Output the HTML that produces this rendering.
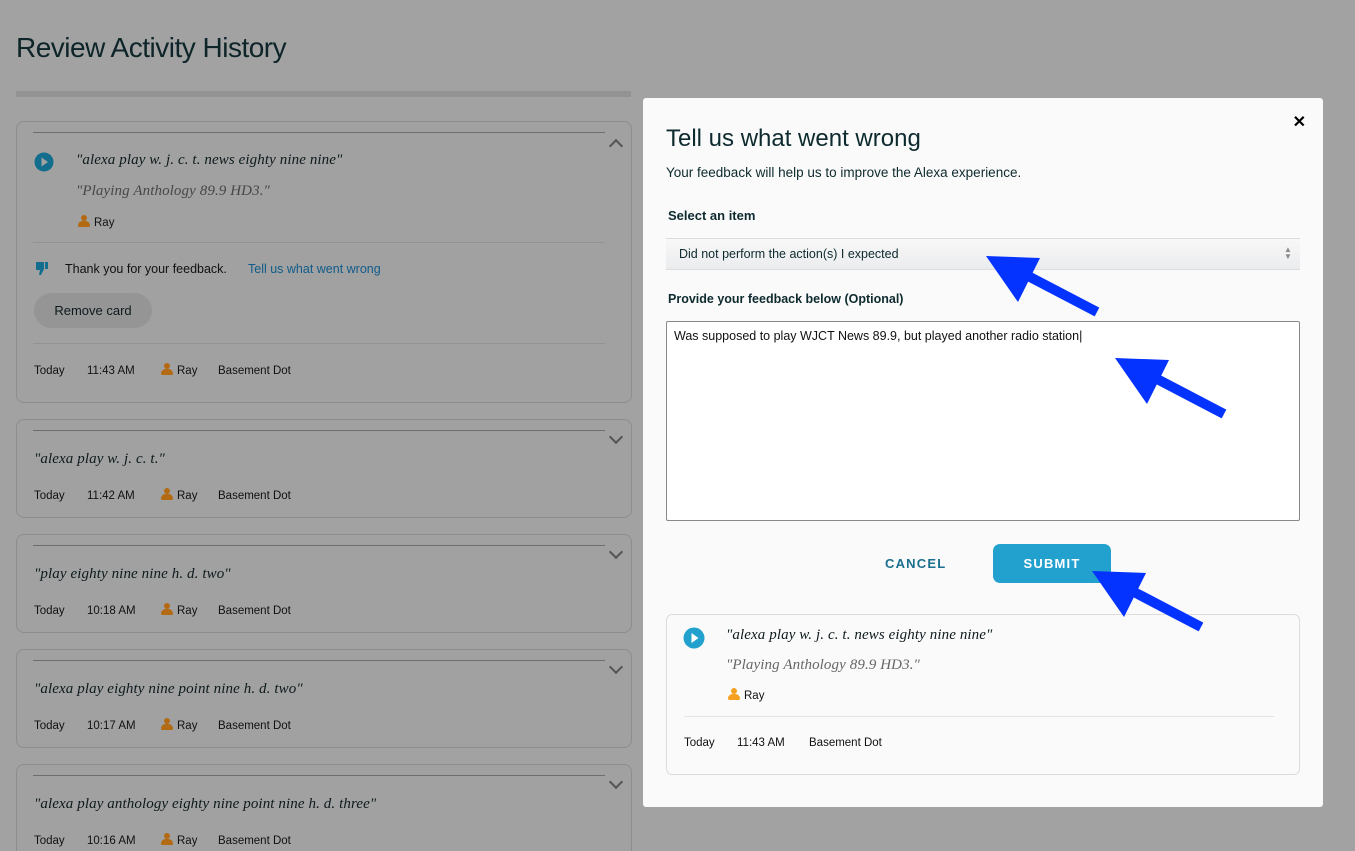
<!DOCTYPE html>
<html style="width:1355px;height:851px;overflow:hidden"><head><meta charset="utf-8"><style>
*{box-sizing:border-box;margin:0;padding:0}
body{width:1355px;height:851px;overflow:hidden;background:#a2a2a2;font-family:"Liberation Sans",sans-serif;color:#0d1a1c;position:relative}
.abs{position:absolute}
h1{position:absolute;left:16px;top:32px;font-weight:normal;font-size:28px;color:#0d2428;letter-spacing:-0.5px}
.bar{left:16px;top:91px;width:615px;height:6px;background:#939393}
.card{position:absolute;left:16px;width:616px;border:1px solid #8d8d8d;border-radius:8px;background:#a1a1a1}
.tl{position:absolute;left:16px;right:26px;top:10px;height:1px;background:#6e6e6e}
.q{position:absolute;font-family:"Liberation Serif",serif;font-style:italic;font-size:15px;color:#0d1a1c;letter-spacing:0.1px}
.meta{position:absolute;font-size:11.5px;color:#111}
.chev{position:absolute;right:10px;width:10px;height:10px;border-right:2.5px solid #555;border-bottom:2.5px solid #555}
.person{display:inline-block;position:relative;width:12px;height:12px;vertical-align:-1px;margin-right:4px}
.person:before{content:"";position:absolute;left:3px;top:0;width:6px;height:6px;border-radius:50%;background:var(--c)}
.person:after{content:"";position:absolute;left:0;top:6px;width:12px;height:6px;border-radius:6px 6px 2px 2px;background:var(--c)}
.modal{left:643px;top:98px;width:680px;height:709px;background:#fafafa;border-radius:3px}
.m{position:absolute;color:#0d2a2e}
</style></head><body>
<h1>Review Activity History</h1>
<div class="abs bar"></div>

<div class="card" style="top:121px;height:282px">
  <div class="tl"></div>
  <div class="chev" style="top:19px;transform:rotate(-135deg)"></div>
  <svg class="abs" style="left:17px;top:30px" width="20" height="20"><circle cx="10" cy="10" r="9.5" fill="#126e8c"/><path d="M7.5 5.5L14 10L7.5 14.5Z" fill="#a1a1a1"/></svg>
  <div class="q" style="left:59px;top:30px">"alexa play w. j. c. t. news eighty nine nine"</div>
  <div class="q" style="left:59px;top:61px;color:#474747">"Playing Anthology 89.9 HD3."</div>
  <div class="meta" style="left:61px;top:93px"><span class="person" style="--c:#b36a12"></span>Ray</div>
  <div class="abs" style="left:16px;right:26px;top:120px;height:1px;background:#939393"></div>
  <svg class="abs" style="left:18px;top:139px" width="14" height="15"><path d="M1 1h8v7l-3 6h-2l1-5h-4z" fill="#126e8c"/><rect x="10" y="1" width="3" height="7" fill="#126e8c"/></svg>
  <div class="meta" style="left:48px;top:140px;font-size:12.5px">Thank you for your feedback.</div>
  <div class="meta" style="left:231px;top:140px;font-size:12.5px;color:#0f5c8a">Tell us what went wrong</div>
  <div class="abs" style="left:17px;top:171px;width:118px;height:35px;border-radius:18px;background:#959595;font-size:13px;line-height:35px;text-align:center">Remove card</div>
  <div class="abs" style="left:16px;right:26px;top:221px;height:1px;background:#939393"></div>
  <div class="meta" style="left:17px;top:243px">Today</div>
  <div class="meta" style="left:70px;top:243px">11:43 AM</div>
  <div class="meta" style="left:144px;top:241px"><span class="person" style="--c:#b36a12"></span>Ray</div>
  <div class="meta" style="left:201px;top:243px">Basement Dot</div>
</div>

<div class="card" style="top:419px;height:99px"><div class="tl"></div><div class="chev" style="top:12px;transform:rotate(45deg)"></div>
<div class="q" style="left:17px;top:31px">"alexa play w. j. c. t."</div>
<div class="meta" style="left:17px;top:70px">Today</div><div class="meta" style="left:70px;top:70px">11:42 AM</div><div class="meta" style="left:144px;top:68px"><span class="person" style="--c:#b36a12"></span>Ray</div><div class="meta" style="left:201px;top:70px">Basement Dot</div></div>

<div class="card" style="top:534px;height:99px"><div class="tl"></div><div class="chev" style="top:12px;transform:rotate(45deg)"></div>
<div class="q" style="left:17px;top:31px">"play eighty nine nine h. d. two"</div>
<div class="meta" style="left:17px;top:70px">Today</div><div class="meta" style="left:70px;top:70px">10:18 AM</div><div class="meta" style="left:144px;top:68px"><span class="person" style="--c:#b36a12"></span>Ray</div><div class="meta" style="left:201px;top:70px">Basement Dot</div></div>

<div class="card" style="top:649px;height:99px"><div class="tl"></div><div class="chev" style="top:12px;transform:rotate(45deg)"></div>
<div class="q" style="left:17px;top:31px">"alexa play eighty nine point nine h. d. two"</div>
<div class="meta" style="left:17px;top:70px">Today</div><div class="meta" style="left:70px;top:70px">10:17 AM</div><div class="meta" style="left:144px;top:68px"><span class="person" style="--c:#b36a12"></span>Ray</div><div class="meta" style="left:201px;top:70px">Basement Dot</div></div>

<div class="card" style="top:764px;height:100px"><div class="tl"></div><div class="chev" style="top:12px;transform:rotate(45deg)"></div>
<div class="q" style="left:17px;top:31px">"alexa play anthology eighty nine point nine h. d. three"</div>
<div class="meta" style="left:17px;top:70px">Today</div><div class="meta" style="left:70px;top:70px">10:16 AM</div><div class="meta" style="left:144px;top:68px"><span class="person" style="--c:#b36a12"></span>Ray</div><div class="meta" style="left:201px;top:70px">Basement Dot</div></div>

<div class="abs modal">
  <div class="m" style="right:17px;top:14px;font-size:16px;font-weight:bold;color:#000">✕</div>
  <div class="m" style="left:23px;top:27px;font-size:24px">Tell us what went wrong</div>
  <div class="m" style="left:23px;top:67px;font-size:13.5px">Your feedback will help us to improve the Alexa experience.</div>
  <div class="m" style="left:25px;top:110px;font-size:13px;font-weight:bold">Select an item</div>
  <div class="abs" style="left:23px;top:140px;width:634px;height:32px;border-top:1px solid #ddd;border-bottom:1px solid #ddd;background:linear-gradient(#f8f8f8,#ebecee)"></div>
  <div class="m" style="left:36px;top:149px;font-size:12.5px">Did not perform the action(s) I expected</div>
  <div class="abs" style="left:641px;top:148px;font-size:8px;line-height:7px;color:#888">▲<br>▼</div>
  <div class="m" style="left:25px;top:194px;font-size:12.5px;font-weight:bold">Provide your feedback below (Optional)</div>
  <div class="abs" style="left:23px;top:223px;width:634px;height:200px;border:1px solid #888;background:#fff;border-radius:2px"></div>
  <div class="m" style="left:31px;top:231px;font-size:12.5px;color:#111">Was supposed to play WJCT News 89.9, but played another radio station|</div>
  <div class="m" style="left:242px;top:458px;font-size:13px;font-weight:bold;letter-spacing:1.2px;color:#1a6f8f">CANCEL</div>
  <div class="abs" style="left:350px;top:446px;width:118px;height:39px;border-radius:7px;background:#22a1cf;color:#fff;font-size:13px;font-weight:bold;letter-spacing:1.2px;text-align:center;line-height:39px">SUBMIT</div>
  <div class="abs" style="left:23px;top:516px;width:634px;height:161px;border:1px solid #ddd;border-radius:6px;background:#fafafa"></div>
  <svg class="abs" style="left:40px;top:529px" width="22" height="22"><circle cx="11" cy="11" r="10.5" fill="#22a1cf"/><path d="M8.5 6L15.5 11L8.5 16Z" fill="#fff"/></svg>
  <div class="q" style="left:83px;top:529px">"alexa play w. j. c. t. news eighty nine nine"</div>
  <div class="q" style="left:83px;top:559px;color:#666">"Playing Anthology 89.9 HD3."</div>
  <div class="meta" style="left:85px;top:590px"><span class="person" style="--c:#f6a020"></span>Ray</div>
  <div class="abs" style="left:41px;width:590px;top:618px;height:1px;background:#e4e4e4"></div>
  <div class="meta" style="left:41px;top:639px">Today</div>
  <div class="meta" style="left:94px;top:639px">11:43 AM</div>
  <div class="meta" style="left:166px;top:639px">Basement Dot</div>
</div>

<svg class="abs" style="left:0;top:0" width="1355" height="851">
  <g fill="#0433ff" stroke="#0433ff">
    <line x1="1097" y1="312" x2="1030" y2="277" stroke-width="10"/>
    <polygon points="986,256 1040,258 1018,302" stroke="none"/>
    <line x1="1224" y1="414" x2="1157" y2="379" stroke-width="10"/>
    <polygon points="1115,358 1169,360 1147,404" stroke="none"/>
    <line x1="1201" y1="627" x2="1134" y2="592" stroke-width="10"/>
    <polygon points="1092,571 1146,573 1124,617" stroke="none"/>
  </g>
</svg>
</body></html>
